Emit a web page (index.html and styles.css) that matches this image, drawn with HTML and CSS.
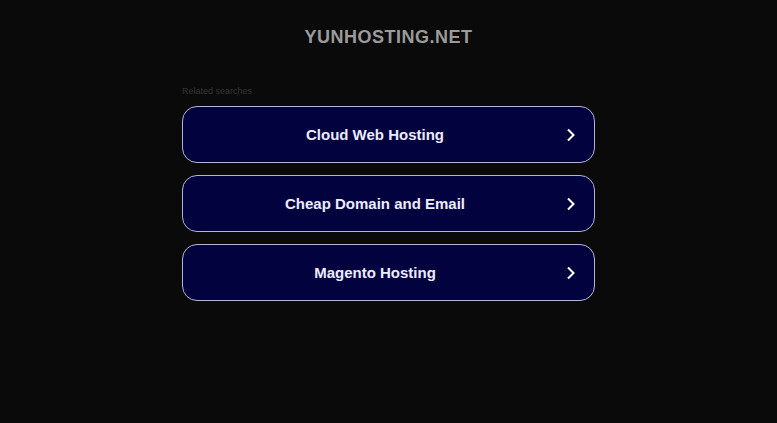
FILE: index.html
```html
<!DOCTYPE html>
<html lang="en">
<head>
    <meta charset="UTF-8">
    <title>yunhosting.net</title>
    <link rel="stylesheet" href="styles.css">
</head>
<body>
<div class="header">
    <h1 class="domain">YUNHOSTING.NET</h1>
</div>
<div class="content">
    <p class="related">Related searches</p>
    <a class="link" href="#"><span class="label">Cloud Web Hosting</span><span class="arrow"><svg width="10" height="14" viewBox="0 0 10 14"><path d="M2 1.5 L7.5 7 L2 12.5" fill="none" stroke="#fff" stroke-width="2"/></svg></span></a>
    <a class="link" href="#"><span class="label">Cheap Domain and Email</span><span class="arrow"><svg width="10" height="14" viewBox="0 0 10 14"><path d="M2 1.5 L7.5 7 L2 12.5" fill="none" stroke="#fff" stroke-width="2"/></svg></span></a>
    <a class="link" href="#"><span class="label">Magento Hosting</span><span class="arrow"><svg width="10" height="14" viewBox="0 0 10 14"><path d="M2 1.5 L7.5 7 L2 12.5" fill="none" stroke="#fff" stroke-width="2"/></svg></span></a>
</div>
</body>
</html>
```
FILE: styles.css
```css
* {
    padding: 0;
    margin: 0;
}
body {
    background: #0a0a0a;
    font-family: "Liberation Sans", Arial, sans-serif;
}
.header {
    padding-top: 26px;
    text-align: center;
}
.domain {
    font-size: 18px;
    font-weight: bold;
    letter-spacing: 0.5px;
    color: #9b9b9b;
    line-height: 22px;
}
.content {
    width: 413px;
    margin: 0 auto;
    padding-top: 38px;
    display: flex;
    flex-direction: column;
    gap: 12px;
}
.related {
    font-size: 9px;
    color: #353535;
    line-height: 10px;
    margin-bottom: -2px;
}
.link {
    height: 57px;
    box-sizing: border-box;
    border: 1px solid #b4b4d8;
    border-radius: 15px;
    background: #02023f;
    display: flex;
    align-items: center;
    padding: 0 18px 0 20px;
    text-decoration: none;
}
.label {
    flex: 1;
    text-align: center;
    margin-right: 19px;
    font-size: 15px;
    font-weight: bold;
    color: #ececff;
}
.arrow {
    display: flex;
    width: 10px;
}
```
